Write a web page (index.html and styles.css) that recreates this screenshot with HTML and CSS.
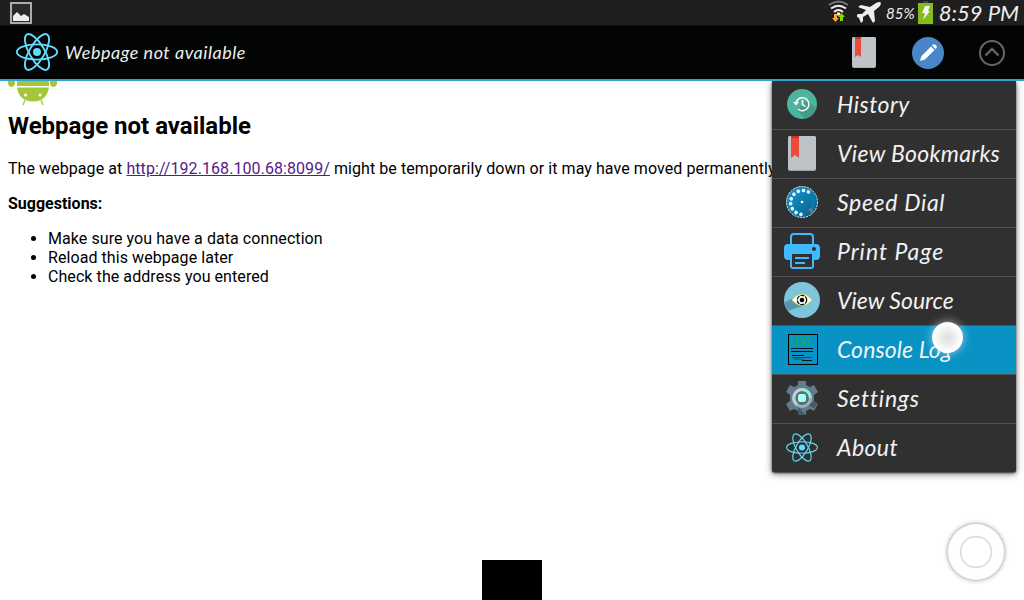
FILE: index.html
```html
<!DOCTYPE html>
<html lang="en">
<head>
<meta charset="utf-8">
<title>Webpage not available</title>
<link rel="stylesheet" href="styles.css">
</head>
<body>
<svg class="defs" width="0" height="0">
  <symbol id="atom" viewBox="0 0 42 38">
    <g fill="none" stroke="#61dafb">
      <ellipse cx="21" cy="19" rx="20.2" ry="7.6"/>
      <ellipse cx="21" cy="19" rx="20.2" ry="7.6" transform="rotate(60 21 19)"/>
      <ellipse cx="21" cy="19" rx="20.2" ry="7.6" transform="rotate(120 21 19)"/>
    </g>
    <circle cx="21" cy="19" r="4" fill="#61dafb"/>
  </symbol>
  <symbol id="book" viewBox="0 0 28 35">
    <rect width="28" height="35" rx="2" fill="#95a5a5"/>
    <rect width="28" height="34" rx="2" fill="#bdc3c7"/>
    <path d="M3 0h8v22l-4-3-4 3z" fill="#e74c3c"/>
    <path d="M3 0h8v2H3z" fill="#c0392b"/>
  </symbol>
</svg>
<div class="screen">
  <header class="status">
    <svg class="picture" width="22" height="22" viewBox="0 0 22 22"><rect x="1" y="1" width="20" height="20" fill="#292929" stroke="#bbb" stroke-width="1.8"/><path d="M3 19v-5l4-4 4 4 3-2 5 3v4z" fill="#eee"/></svg>
    <div class="tray">
      <svg class="wifi" width="22" height="24" viewBox="0 0 22 24"><g fill="none" stroke-width="2"><path d="M1 5q9.500-7 19 0" stroke="#777"/><path d="M3 8.500q7.500-5.500 15 0" stroke="#eee"/><path d="M6 12q4.500-4 9 0" stroke="#eee"/></g><circle cx="10.500" cy="14" r="1.800" fill="#eee"/><path d="M6 14h3v4h2l-3.500 4L4 18h2z" fill="#ffa63c"/><path d="M12 21h3v-4h2l-3.500-4-3.500 4h2z" fill="#88d600"/></svg>
      <svg class="plane" width="25" height="22" viewBox="0 0 25 22"><path d="M1 5l3-2 9 2 6-4q4-2 5 0 0 2-2 4l-5 4 1 10-2 2-5-9-5 3v4l-2 2-2-5-3-2 2-2h4l4-4z" fill="#eee"/></svg>
      <span class="percent">85%</span>
      <svg class="battery" width="15" height="23" viewBox="0 0 15 23"><path d="M5 0h5v2H5z" fill="#444"/><path d="M0 2h15v21H0z" fill="#82bd1c"/><path d="M7 5h5l-2 5h2l-7 9 2-7H4z" fill="#f5f5f5"/></svg>
      <span class="clock">8:59 PM</span>
    </div>
  </header>
  <nav class="appbar">
    <svg class="logo" width="42" height="38" stroke-width="1.900"><use href="#atom"/></svg>
    <span class="title">Webpage not available</span>
    <div class="actions">
      <svg width="24" height="31" viewBox="0 0 24 31"><rect width="24" height="31" rx="2" fill="#a0b0ae"/><rect width="24" height="30" rx="2" fill="#bdc3c7"/><path d="M3 0h6v20l-3-2-3 2z" fill="#e74c3c"/><path d="M3 0h6v2H3z" fill="#c0392b"/></svg>
      <svg width="32" height="32" viewBox="0 0 32 32"><circle cx="16" cy="16" r="16" fill="#4a86c7"/><path d="M8 24l1.500-5L19 9.500l3.500 3.500-9.500 9.500zM20 8.500l1-1q1-.7 2 0l1.500 1.500q.7 1 0 2l-1 1z" fill="#fff"/></svg>
      <svg width="26" height="26" viewBox="0 0 26 26" fill="none" stroke="#666" stroke-width="2"><circle cx="13" cy="13" r="12"/><path d="M6.500 15.500L13 9l6.500 6.500" stroke-width="2.300"/></svg>
    </div>
  </nav>
  <main class="page">
    <svg class="android" width="50" height="25" viewBox="0 0 50 25"><g fill="#a4c639"><path d="M0 0h7v3q-1 3-3.500 3T0 3zM42 0h7v3q-1 3-3.500 3T42 3zM9 0h32v5H9zM9 6.500h32Q39 20 25 20.500 11 20 9 6.500z"/><path d="M17 19l-2 5M33 19l2 5" stroke="#a4c639" stroke-width="1.300"/></g><circle cx="17.500" cy="14" r="1.500" fill="#fff"/><circle cx="32" cy="14" r="1.500" fill="#fff"/></svg>
    <h1>Webpage not available</h1>
    <p class="message">The webpage at <a href="#">http://192.168.100.68:8099/</a> might be temporarily down or it may have moved permanently</p>
    <p class="subhead">Suggestions:</p>
    <ul>
      <li>Make sure you have a data connection</li>
      <li>Reload this webpage later</li>
      <li>Check the address you entered</li>
    </ul>
  </main>
  <div class="menu">
    <div class="item"><svg width="30" height="30" viewBox="0 0 30 30"><circle cx="15" cy="15" r="15" fill="#4cb5a0"/><path d="M20 11l9 8a15 15 0 0 1-11 11l-8-9z" fill="#429c89"/><g fill="none" stroke="#fff" stroke-width="1.500"><path d="M9 14a6.500 6.500 0 1 1 2 6M15.500 11v4.500l3 2"/></g><path d="M6 13h6l-3 3.500z" fill="#fff"/></svg><span class="history">History</span></div>
    <div class="item"><svg width="28" height="35"><use href="#book"/></svg><span class="bookmarks">View Bookmarks</span></div>
    <div class="item"><svg width="32" height="32" viewBox="0 0 32 32"><defs><linearGradient id="dial" x2="1" y2="1"><stop stop-color="#169bd0"/><stop offset="1" stop-color="#075c87"/></linearGradient></defs><circle cx="16" cy="16" r="15.500" fill="url(#dial)" stroke="#dceef5" stroke-dasharray="2 1"/><path d="M22.500 6A12 12 0 1 0 20 28" fill="none" stroke="#e9f2f5" stroke-width="3.600" stroke-linecap="round" stroke-dasharray=".1 5.100"/><path d="M25 9q5 7 0 15" fill="none" stroke="#087eac" stroke-width="3"/><path d="M22 23l3-1 3 4-2 2z" fill="#777"/><circle cx="16" cy="16" r="1.300" fill="#fff"/></svg><span class="dial">Speed Dial</span></div>
    <div class="item"><svg width="36" height="36" viewBox="0 0 36 36"><path d="M7 12V4q0-3 3-3h16q3 0 3 3v8" fill="none" stroke="#40baff" stroke-width="2"/><path d="M4 11h28q4 0 4 4v8q0 4-4 4h-2v6q0 3-3 3H9q-3 0-3-3v-6H4q-4 0-4-4v-8q0-4 4-4z" fill="#40baff"/><path d="M8 21h20v13H8z" fill="#303030"/><path d="M11 25h14M11 30h10" stroke="#40baff" stroke-width="2"/><circle cx="30" cy="16" r="2" fill="#303030"/></svg><span class="print">Print Page</span></div>
    <div class="item"><svg width="36" height="36" viewBox="0 0 36 36"><circle cx="18" cy="18" r="18" fill="#7dc5db"/><path d="M8 17L1 20q0 6 3 9l14-5z" fill="#5797ac"/><path d="M8 18q10-12 20 0-10 11-20 0z" fill="#fff" stroke="#e4dc45"/><circle cx="18" cy="18" r="4.700" fill="#fff" stroke="#111" stroke-width="1.300" stroke-dasharray="4 1"/><circle cx="18" cy="18" r="2.300"/></svg><span class="source">View Source</span></div>
    <div class="item selected"><svg class="log" width="30" height="31" viewBox="0 0 30 31"><rect x=".5" y=".5" width="29" height="30" fill="none" stroke="#000"/><text x="2" y="12">LOG</text><path d="M3 14.500h22M3 17.500h22M4 21.500h12M14 26.500h10" stroke="#05131a"/><path d="M4 23.500h20M6 25h10" stroke="#075570"/></svg><span class="console">Console Log</span></div>
    <div class="item"><svg width="32" height="34" viewBox="0 0 32 34"><path d="M12 0h8v4l4 2 4-2 4 7-4 3v6l4 3-4 7-4-2-4 2v4h-8v-4l-4-2-4 2-4-7 4-3v-6l-4-3 4-7 4 2 4-2z" fill="#607d8b"/><path d="M22 24l6 3 4-4-4-3zM12 26l8 8h-8z" fill="#455a64"/><circle cx="16" cy="17" r="8.500" fill="#536d79" stroke="#9fb1b9" stroke-width="3"/><path d="M16 8.500a8.500 8.500 0 0 1 8.500 8.500" fill="none" stroke="#8eeedb" stroke-width="3"/><path d="M16 8.500a8.500 8.500 0 0 0-5 15" fill="none" stroke="#c2ced3" stroke-width="3"/><rect x="12" y="13" width="8" height="8" rx="2" fill="#a7ffeb"/></svg><span class="settings">Settings</span></div>
    <div class="item"><svg width="32" height="29" stroke-width="1.500"><use href="#atom"/></svg><span class="about">About</span></div>
  </div>
  <div class="touch"></div>
  <div class="floating"><div class="ring"></div></div>
  <div class="handle"></div>
</div>
</body>
</html>
```
FILE: styles.css
```css
body { margin: 0; font-family: Roboto, sans-serif; }
.defs { position: absolute; }
.screen { position: relative; width: 1024px; height: 600px; overflow: hidden; background: #fff; }
.status { box-sizing: border-box; height: 26px; padding: 2px 5px 0 10px; display: flex; justify-content: space-between; background: #1f1f1f; color: #eee; border-bottom: 1px solid #111; }
.tray { display: flex; width: 191px; }
.tray svg { flex: none; }
.wifi { margin-top: -2px; }
.plane { margin-left: 7px; }
.percent { width: 31px; margin-left: 4px; font: italic 15px/22px Lato, sans-serif; letter-spacing: 0; }
.battery { margin-left: 3px; margin-top: -1px; }
.clock { margin-left: 6px; font: italic 22px/21px Lato, sans-serif; white-space: nowrap; letter-spacing: 0; }
.appbar { box-sizing: border-box; height: 55px; padding: 0 19px 2px 16px; display: flex; align-items: center; background: #030404; border-bottom: 2px solid #2da5d2; color: #eee; }
.title { margin-left: 7px; font: italic 18px/24px Lato, sans-serif; letter-spacing: .52px; }
.logo { margin-top: 1px; }
.actions { margin-left: auto; display: flex; align-items: center; padding-top: 2px; }
.actions svg + svg { margin-left: 35px; }
.actions svg:first-child { margin-right: 1px; }
.page { padding-left: 8px; font-size: 16px; line-height: 19px; color: #000; white-space: nowrap; letter-spacing: .07px; }
.android { display: block; }
h1 { margin: 6px 0 18px; font-size: 24px; line-height: 29px; font-weight: 700; letter-spacing: 0; }
p { margin: 0 0 16px; }
a { color: #551a8b; }
.subhead { font-weight: 700; letter-spacing: 0; }
ul { margin: 0; padding-left: 40px; }
.menu { position: absolute; left: 772px; top: 81px; width: 244px; background: #303030; box-shadow: 0 2px 7px #0008, 0 1px 2px #555; border-radius: 0 0 2px 2px; clip-path: inset(0 -10px -12px -10px); }
.item { box-sizing: border-box; height: 49px; padding: 0 0 2px 12px; display: grid; grid-template-columns: 36px 1fr; column-gap: 17px; align-items: center; border-bottom: 1px solid #505050; color: #f2f2f2; font: italic 23px/32px Lato, sans-serif; white-space: nowrap; }
.item:last-child { border-bottom: 0; height: 48px; }
.item svg { justify-self: center; }
.item span { justify-self: start; }
.history { letter-spacing: .5px; }
.bookmarks { letter-spacing: .32px; }
.dial { letter-spacing: .68px; }
.print { letter-spacing: 1px; }
.console { letter-spacing: .1px; }
.settings { letter-spacing: .75px; }
.about { letter-spacing: .4px; }
.selected { background: #0993c4; }
.log { font: 12px Roboto, sans-serif; fill: #1ab52a; position: relative; left: 1px; }
.log text { letter-spacing: -1px; }
.touch { position: absolute; left: 932px; top: 322px; width: 31px; height: 31px; border-radius: 50%; background: radial-gradient(circle, #ddd, #fff 65%); box-shadow: 0 0 1px #579, 0 0 10px #fff9; }
.floating { position: absolute; left: 948px; top: 524px; width: 56px; height: 56px; display: grid; place-items: center; border-radius: 50%; background: #fff; box-shadow: 0 0 5px #0007; }
.ring { width: 30px; height: 30px; border: 1px solid #ccc; border-radius: 50%; box-shadow: 0 0 1px #ccc; }
.handle { position: absolute; left: 482px; top: 560px; width: 60px; height: 40px; background: #000; }
```
